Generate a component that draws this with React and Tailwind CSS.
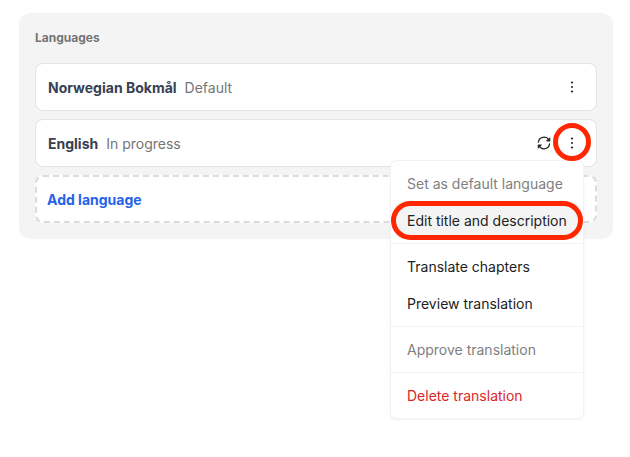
const DotsIcon = () => (
    <svg viewBox="0 0 16 16" className="w-4 h-4" fill="currentColor" aria-hidden="true">
        <circle cx="8" cy="3.5" r="1.1" />
        <circle cx="8" cy="8" r="1" />
        <circle cx="8" cy="12.5" r="1.1" />
    </svg>
);

const SyncIcon = () => (
    <svg
        viewBox="0 0 16 16"
        className="w-4 h-4"
        fill="none"
        stroke="currentColor"
        strokeWidth="1.2"
        strokeLinecap="round"
        strokeLinejoin="round"
        aria-hidden="true"
    >
        <path d="M2.4 7.2a5.7 5.7 0 0 1 10.4-2.4" />
        <path d="M13.6 8.8a5.7 5.7 0 0 1-10.4 2.4" />
        <path d="M13.8 3.2v2.8h-2.8z" fill="currentColor" strokeWidth="1" />
        <path d="M2.2 12.8V10h2.8z" fill="currentColor" strokeWidth="1" />
    </svg>
);

const menuGroups = [
    [
        { label: "Set as default language", disabled: true },
        { label: "Edit title and description", active: true },
    ],
    [{ label: "Translate chapters" }, { label: "Preview translation" }],
    [{ label: "Approve translation", disabled: true }],
    [{ label: "Delete translation", danger: true }],
];

const itemColor = (item) => {
    if (item.disabled) return "text-[#808080]";
    if (item.danger) return "text-[#dc2626]";
    return "text-[#222222]";
};

const TranslationMenu = () => (
    <div
        role="menu"
        className="absolute top-full right-0 z-10 mt-px w-[194px] rounded-md border border-[#f2f2f2] bg-white shadow-xs"
    >
        {menuGroups.map((group, i) => (
            <div key={i} role="group" className="border-b border-[#f2f2f2] p-1 last:border-b-0">
                {group.map((item) => (
                    <div key={item.label} className="relative">
                        <button
                            type="button"
                            role="menuitem"
                            disabled={item.disabled}
                            className={`block h-[37px] w-full rounded-md px-3 text-left whitespace-nowrap ${itemColor(item)} ${item.active ? "bg-[#f4f4f4]" : ""}`}
                        >
                            {item.label}
                        </button>
                        {/* Highlight around the current item */}
                        {item.active && (
                            <span className="pointer-events-none absolute -inset-x-1 -inset-y-px rounded-full border-5 border-[#ff2600]" />
                        )}
                    </div>
                ))}
            </div>
        ))}
    </div>
);

const LanguageRow = ({ name, status, canSync, menuOpen }) => (
    <li className="flex h-12 items-center justify-between rounded-lg border border-[#e4e4e4] bg-white px-3">
        <div className="flex gap-2 pt-0.5">
            <span className="font-bold text-[#374151]">{name}</span>
            <span className="text-[#757575]">{status}</span>
        </div>
        <div className="flex items-center gap-1 text-[#222222]">
            {canSync && (
                <button type="button" aria-label="Sync translation" className="flex h-8 w-6 items-center justify-center">
                    <SyncIcon />
                </button>
            )}
            <div className="relative">
                <button
                    type="button"
                    aria-label={`Options for ${name}`}
                    aria-haspopup="menu"
                    className="flex h-8 w-6 items-center justify-center"
                >
                    <DotsIcon />
                </button>
                {menuOpen && <TranslationMenu />}
                {menuOpen && (
                    <span className="pointer-events-none absolute -inset-x-[7px] -top-1 -bottom-0.5 z-20 rounded-full border-5 border-[#ff2600]" />
                )}
            </div>
        </div>
    </li>
);

const App = () => {
    return (
        <main className="min-h-screen bg-white pt-[13px] pr-[17px] pl-[19px] font-['Inter',sans-serif] text-sm">
            <section className="rounded-xl bg-[#f4f4f4] p-4">
                <h2 className="mb-[17px] pt-px text-xs leading-4 font-bold text-[#757575]">Languages</h2>
                <ul className="flex flex-col gap-2">
                    <LanguageRow name="Norwegian Bokmål" status="Default" />
                    <LanguageRow name="English" status="In progress" canSync menuOpen />
                    <li>
                        <button
                            type="button"
                            className="block h-12 w-full rounded-lg border-2 border-dashed border-[#dcdcdc] bg-white px-[10px] pt-0.5 text-left font-bold text-[#2563eb]"
                        >
                            Add language
                        </button>
                    </li>
                </ul>
            </section>
        </main>
    );
};

export default App;
